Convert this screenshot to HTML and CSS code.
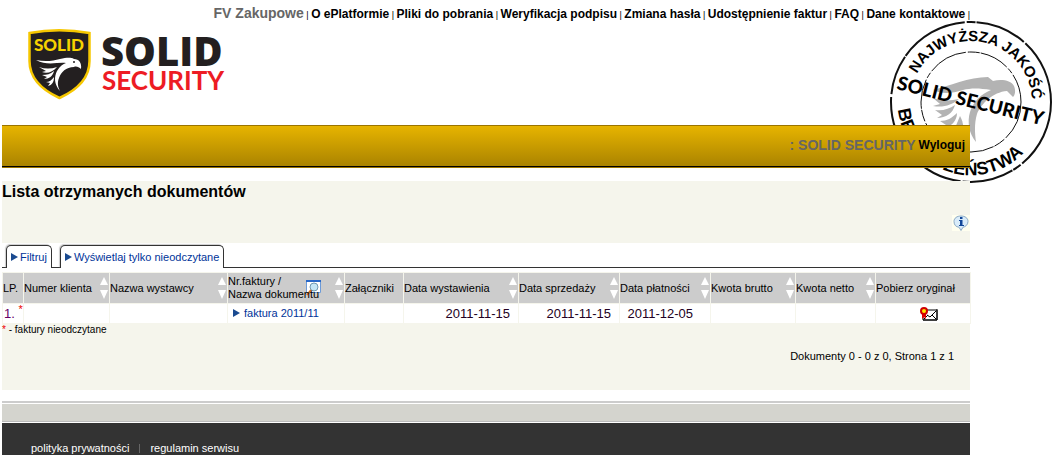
FILE: index.html
```html
<!DOCTYPE html>
<html lang="pl">
<head>
<meta charset="utf-8">
<title>Lista otrzymanych dokumentów</title>
<link rel="stylesheet" href="styles.css">
</head>

<body>
<svg class="stamp" viewBox="0 0 164 164" aria-hidden="true">
	<defs>
		<path id="arc-top" d="M21 82a61 61 0 0 1 122 0" />
		<path id="arc-bottom" d="M9 76a73 73 0 0 0 146 12" />
	</defs>
	<circle class="ring" cx="82" cy="82" r="80" stroke-width="2" stroke-dasharray="70 2 9 1 52 2 120 3 40 1" />
	<circle class="ring" cx="82" cy="82" r="50" stroke-width="1" stroke-dasharray="40 2 12 1 30 2 6 2" />
	<g fill="#b3b3b3">
		<path d="M44 70C60 66 80 57 99 57l5 4c8-2 18-1 21 5 2 5 1 9-1 11l-6-6c-14 1-26 13-30 23-3 10-2 20-1 28-7-8-9-20-6-30 3-10 11-18 21-22-12-2-20-2-28 0-12 4-22 4-30 0z" />
		<path d="M44 78c8 3 17 3 26 1-7 6-16 9-26 7l7-2z" />
		<path d="M46 90c8 1 14-1 20-5-2 8-9 13-18 13l5-3z" />
		<path d="M51 101c7 0 12-3 17-8 0 8-6 14-14 15l3-3z" />
		<path d="M66 108l5-12c4 7 4 14 2 22z" />
	</g>
	<text class="stamp-arc stamp-top"><textPath href="#arc-top" startOffset="57%">NAJWYŻSZA JAKOŚĆ</textPath></text>
	<text class="stamp-arc stamp-bottom"><textPath href="#arc-bottom" startOffset="42%">BEZPIECZEŃSTWA</textPath></text>
	<text class="stamp-name" x="7" y="69" transform="rotate(14 7 69)">SOLID SECURITY</text>
</svg>

<div class="page">
	<header class="top">
		<nav class="menu">
			<a class="current" href="#">FV Zakupowe</a> | <a href="#">O ePlatformie</a> | <a href="#">Pliki do pobrania</a> | <a href="#">Weryfikacja podpisu</a> | <a href="#">Zmiana hasła</a> | <a href="#">Udostępnienie faktur</a> | <a href="#">FAQ</a> | <a href="#">Dane kontaktowe</a> |
		</nav>
		<a class="logo" href="#" aria-label="Solid Security">
			<svg width="200" height="72" viewBox="0 0 200 72">
				<path d="M1.500 4Q31-1.500 61.500 4V32C61.500 50 49 61 31.500 69 14 61 1.500 50 1.500 32z" fill="#231f20" stroke="#f6c700" stroke-width="2.500" />
				<text class="shield-name" x="31" y="22">SOLID</text>
				<g fill="#fff">
					<path d="M8 31c9 2 17 1 24-1 6-1 10-2 14 0 5 0 8 4 7 10-2-2-5-3-7-2-8 0-13 5-15 11-2 5-1 9 1 13-6-7-6-14-3-20 3-5 6-7 9-8-9-1-19 3-30-3z" />
					<path d="M11 38c6 2 12 2 18 0-4 5-10 7-15 5l4-1z" />
					<path d="M14 46c5 0 8-1 12-4-1 5-5 8-10 8l3-2z" />
					<path d="M18 53c3 0 6-2 8-5 0 5-2 8-6 9l2-3z" />
				</g>
				<circle cx="46" cy="33" r="1" fill="#231f20" />
				<text class="logo-solid" x="73" y="37">SOLID</text>
				<text class="logo-security" x="74" y="61">SECURITY</text>
			</svg>
		</a>
	</header>

	<div class="user-bar">
		<span class="user">: SOLID SECURITY</span>
		<a href="#">Wyloguj</a>
	</div>

	<main>
		<div class="heading">
			<h1>Lista otrzymanych dokumentów</h1>
			<button class="info" type="button" aria-label="Informacje">
				<svg width="18" height="16" viewBox="0 0 18 16">
					<path d="M9 1c4 0 7 2 7 5.500S13 12 11 12.200L9 15.500 7 12.200C4 12 2 10 2 6.500S5 1 9 1z" fill="#d9ecfa" stroke="#8ba9c4" />
					<path d="M8 2h2.500v2H8zM7 5h3.500v5H12v1H7v-1h1V6H7z" fill="#12489a" />
				</svg>
			</button>
		</div>

		<div class="tabs">
			<a class="tab" href="#"><span class="arrow"></span>Filtruj</a>
			<a class="tab" href="#"><span class="arrow"></span>Wyświetlaj tylko nieodczytane</a>
		</div>

		<table class="documents">
			<colgroup>
				<col class="col-lp"><col class="col-client"><col class="col-issuer"><col class="col-invoice"><col class="col-files"><col class="col-issued"><col class="col-sold"><col class="col-due"><col class="col-gross"><col class="col-net"><col class="col-original">
			</colgroup>
			<thead>
				<tr>
					<th>LP.</th>
					<th><div class="head">Numer klienta <button class="sort" type="button" aria-label="Sortuj"><svg width="10" height="24" viewBox="0 0 10 24"><path d="M5 1l4 8H1zM1 14h8l-4 9z" /></svg></button></div></th>
					<th><div class="head">Nazwa wystawcy <button class="sort" type="button" aria-label="Sortuj"><svg width="10" height="24" viewBox="0 0 10 24"><path d="M5 1l4 8H1zM1 14h8l-4 9z" /></svg></button></div></th>
					<th>
						<div class="head">
							<span class="two-lines">Nr.faktury /<br>Nazwa dokumentu</span>
							<svg class="search" width="17" height="17" viewBox="0 0 17 17">
								<path d="M1.500 1.500h14v12h-14z" fill="#fff" stroke="#6d9bd8" />
								<path d="M1 1h15v2H1z" fill="#2868c8" />
								<circle cx="9" cy="8" r="4" fill="#c4e6f6" stroke="#7199b0" />
								<path d="M6 11l-4 5" stroke="#d56b14" stroke-width="2" />
							</svg>
							<button class="sort" type="button" aria-label="Sortuj"><svg width="10" height="24" viewBox="0 0 10 24"><path d="M5 1l4 8H1zM1 14h8l-4 9z" /></svg></button>
						</div>
					</th>
					<th>Załączniki</th>
					<th><div class="head">Data wystawienia <button class="sort" type="button" aria-label="Sortuj"><svg width="10" height="24" viewBox="0 0 10 24"><path d="M5 1l4 8H1zM1 14h8l-4 9z" /></svg></button></div></th>
					<th><div class="head">Data sprzedaży <button class="sort" type="button" aria-label="Sortuj"><svg width="10" height="24" viewBox="0 0 10 24"><path d="M5 1l4 8H1zM1 14h8l-4 9z" /></svg></button></div></th>
					<th><div class="head">Data płatności <button class="sort" type="button" aria-label="Sortuj"><svg width="10" height="24" viewBox="0 0 10 24"><path d="M5 1l4 8H1zM1 14h8l-4 9z" /></svg></button></div></th>
					<th><div class="head">Kwota brutto <button class="sort" type="button" aria-label="Sortuj"><svg width="10" height="24" viewBox="0 0 10 24"><path d="M5 1l4 8H1zM1 14h8l-4 9z" /></svg></button></div></th>
					<th><div class="head">Kwota netto <button class="sort" type="button" aria-label="Sortuj"><svg width="10" height="24" viewBox="0 0 10 24"><path d="M5 1l4 8H1zM1 14h8l-4 9z" /></svg></button></div></th>
					<th>Pobierz oryginał</th>
				</tr>
			</thead>
			<tbody>
				<tr>
					<td class="number">1. <sup>*</sup></td>
					<td></td>
					<td></td>
					<td class="invoice"><a href="#"><span class="arrow"></span>faktura 2011/11</a></td>
					<td></td>
					<td class="date">2011-11-15</td>
					<td class="date">2011-11-15</td>
					<td class="date due">2011-12-05</td>
					<td></td>
					<td></td>
					<td class="original">
						<button class="download" type="button" aria-label="Pobierz oryginał">
							<svg width="18" height="14" viewBox="0 0 18 14">
								<path d="M3 3h14v10H3z" fill="#fff" stroke="#000" stroke-width="1" />
								<path d="M17 2v11H3M4 12l4-4M16 12l-4-4M7 8l3 2 6-6" fill="none" stroke="#000" />
								<path d="M2 6h4v6L4 10l-2 2z" fill="#e00000" />
								<circle cx="4" cy="4" r="3" fill="#ffe500" stroke="#d00000" stroke-width="2" />
							</svg>
						</button>
					</td>
				</tr>
			</tbody>
		</table>

		<div class="summary">
			<p class="legend"><span class="star">*</span> - faktury nieodczytane</p>
			<p class="paging">Dokumenty 0 - 0 z 0, Strona 1 z 1</p>
		</div>
	</main>

	<footer>
		<div class="strip"></div>
		<div class="links">
			<a href="#">polityka prywatności</a>
			<span class="divider"></span>
			<a href="#">regulamin serwisu</a>
		</div>
	</footer>
</div>
</body>
</html>
```
FILE: styles.css
```css
* {
	box-sizing:border-box;
}

body {
	margin:0;
	position:relative;
	background:#fff;
	color:#000;
	font:11px/13px 'Liberation Sans', Arial, sans-serif;
}

a {
	color:inherit;
	text-decoration:none;
}

button {
	padding:0;
	border:0;
	background:none;
	cursor:pointer;
}

svg {
	display:block;
}

h1, p {
	margin:0;
}

.page {
	position:relative;
	margin:0 85px 0 2px;
}

/* Stamp in the corner, partly hidden by the page */
.stamp {
	position:absolute;
	top:20px;
	right:2px;
	width:164px;
	height:164px;
}

.ring {
	fill:none;
	stroke:#111;
}

.stamp-arc {
	font-weight:bold;
	text-anchor:middle;
}

.stamp-top {
	font-size:15px;
}

.stamp-bottom {
	font-size:18px;
}

.stamp-name {
	font:900 19px Lato, sans-serif;
}

.top {
	height:125px;
}

.menu {
	padding-top:5px;
	font-size:9px;
	line-height:17px;
	text-align:right;
	white-space:nowrap;
}

.menu a {
	font-size:12px;
	font-weight:bold;
}

.menu .current {
	color:#666;
	font-size:14px;
}

.logo {
	display:inline-block;
	padding:5px 0 0 26px;
}

.shield-name {
	fill:#f6d200;
	font:900 17px Lato, sans-serif;
	text-anchor:middle;
}

.logo-solid {
	fill:#231f20;
	font:800 40px 'Open Sans', sans-serif;
}

.logo-security {
	fill:#ed1c24;
	font:bold 26px Lato, sans-serif;
}

.user-bar {
	display:flex;
	justify-content:flex-end;
	align-items:center;
	gap:3px;
	height:43px;
	padding:0 5px 2px 0;
	border-top:1px solid #9a7400;
	border-bottom:1px solid #9a7400;
	background:linear-gradient(#e6b400, #a98200);
	box-shadow:inset 0 -1px #000;
	font-size:12px;
	font-weight:bold;
}

.user {
	color:#666;
	font-size:14px;
}

.heading {
	display:flex;
	flex-direction:column;
	justify-content:space-between;
	height:62px;
	margin-top:13px;
	padding-bottom:12px;
	background:#f5f5ec;
}

h1 {
	font-size:16px;
	line-height:21px;
}

.info {
	align-self:flex-end;
	background:#fffff0;
}

.tabs {
	display:flex;
	gap:8px;
	margin-top:2px;
	padding-left:4px;
	border-bottom:1px solid #333;
}

.tab {
	display:flex;
	align-items:center;
	height:23px;
	margin-bottom:-1px;
	padding:0 4px;
	border:1px solid #333;
	border-bottom:0;
	border-radius:5px 5px 0 0;
	background:#fff;
	box-shadow:-1px -1px 1px #ccc;
	color:#039;
	white-space:nowrap;
}

.arrow {
	display:inline-block;
	margin-right:2px;
	border:4px solid transparent;
	border-left:7px solid #1a4a90;
	border-right:0;
}

.documents {
	width:100%;
	margin-top:4px;
	border-collapse:collapse;
	table-layout:fixed;
}

.col-lp { width:21px; }
.col-client { width:86px; }
.col-issuer { width:118px; }
.col-invoice { width:117px; }
.col-files { width:59px; }
.col-issued { width:115px; }
.col-sold { width:101px; }
.col-due { width:91px; }
.col-gross { width:85px; }
.col-net { width:80px; }
.col-original { width:95px; }

th, td {
	padding:0;
	border:1px solid #f5f5ec;
	text-align:left;
	white-space:nowrap;
}

th {
	height:31px;
	background:#ccc;
	font-weight:normal;
}

td {
	height:20px;
}

.head {
	position:relative;
	display:flex;
	justify-content:space-between;
	align-items:center;
}

.search {
	position:absolute;
	right:22px;
	top:4px;
}

.two-lines {
	position:relative;
	z-index:1;
}

.sort {
	fill:#fff;
}

.number {
	padding-left:1px;
	color:#606;
	font-size:13px;
}

.number sup {
	color:#e00;
	font-size:11px;
	line-height:1px;
}

.invoice {
	padding-left:5px;
	color:#039;
}

.invoice .arrow {
	margin-right:4px;
}

.date {
	padding-right:8px;
	color:#202;
	font-size:13px;
	text-align:right;
}

.due {
	padding-right:17px;
}

.download {
	display:block;
	margin:0 auto;
}

.original {
	padding-left:12px;
}

.summary {
	height:66px;
	background:#f5f5ec;
}

.legend {
	font-size:10px;
	line-height:12px;
}

.star {
	color:#e00;
}

.paging {
	padding:14px 16px 0 0;
	text-align:right;
}

footer {
	margin-top:11px;
	border-top:2px solid #ccc;
}

.strip {
	height:18px;
	margin:1px 0;
	border-bottom:1px solid #bbb;
	background:#d4d4ce;
}

.links {
	display:flex;
	align-items:center;
	gap:10px;
	padding:19px 29px 0;
	background:#333;
	color:#fff;
}

.divider {
	width:1px;
	height:9px;
	background:#666;
}
```
